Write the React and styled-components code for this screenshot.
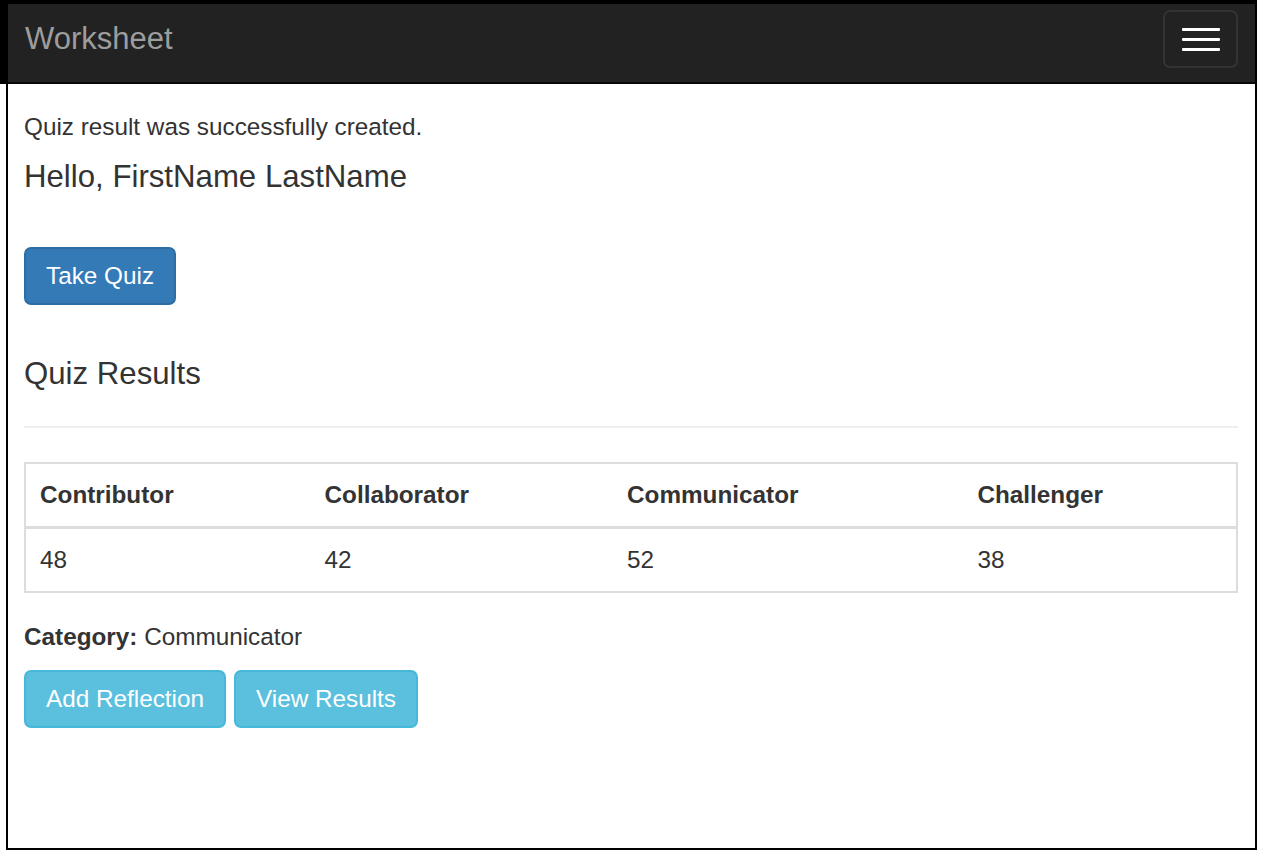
import React from "react";
import styled, { createGlobalStyle } from "styled-components";

const GlobalStyle = createGlobalStyle`
  html, body {
    margin: 0;
    padding: 0;
    background: #fff;
  }
  body {
    font-family: "Liberation Sans", Arial, sans-serif;
    color: #333;
  }
  * { box-sizing: border-box; }
`;

const Frame = styled.div`
  width: 1251px;
  height: 850px;
  margin-left: 6px;
  border: 2px solid #000;
  border-top: 0;
  display: flex;
  flex-direction: column;
`;

const Navbar = styled.nav`
  height: 84px;
  background: #222;
  border-top: 4px solid #000;
  border-bottom: 2px solid #080808;
  box-shadow: -8px 0 0 #000;
  display: flex;
  align-items: flex-start;
  justify-content: space-between;
  padding: 6px 17px 0 17px;
`;

const Brand = styled.a`
  font-size: 31px;
  line-height: 58px;
  color: #9d9d9d;
  text-decoration: none;
`;

const Toggle = styled.button`
  width: 75px;
  height: 58px;
  border: 2px solid #333;
  border-radius: 7px;
  background: transparent;
  display: flex;
  flex-direction: column;
  align-items: center;
  justify-content: center;
  gap: 7px;
  padding: 0;
`;

const Bar = styled.span`
  display: block;
  width: 38px;
  height: 3px;
  border-radius: 1px;
  background: #fff;
`;

const Content = styled.main`
  padding: 26px 17px 0 16px;
  display: flex;
  flex-direction: column;
  align-items: flex-start;
`;

const Notice = styled.p`
  margin: 0;
  font-size: 24.3px;
  line-height: 34px;
`;

const Heading = styled.h4`
  margin: ${(p) => p.$top}px 0 0 0;
  font-size: 31.2px;
  line-height: 34px;
  font-weight: 400;
  color: #333;
`;

const Button = styled.a`
  display: inline-block;
  font-size: 24.3px;
  line-height: 34px;
  padding: 10px 20px;
  border-radius: 7px;
  color: #fff;
  text-decoration: none;
  background: ${(p) => (p.$variant === "info" ? "#5bc0de" : "#337ab7")};
  border: 2px solid ${(p) => (p.$variant === "info" ? "#46b8da" : "#2e6da4")};
`;

const TakeQuiz = styled(Button)`
  margin-top: 53px;
`;

const Rule = styled.hr`
  align-self: stretch;
  margin: 35px 0 0 0;
  border: 0;
  border-top: 2px solid #eee;
  height: 0;
`;

const Table = styled.table`
  align-self: stretch;
  margin-top: 34px;
  border-collapse: collapse;
  border: 2px solid #ddd;
  font-size: 24.3px;
`;

const Th = styled.th`
  text-align: left;
  font-weight: 700;
  padding: 14px;
  line-height: 34px;
  border: 2px solid #ddd;
  border-left: 0;
  border-right: 0;
  border-bottom: 3px solid #ddd;
  width: ${(p) => p.$w}px;
`;

const Td = styled.td`
  padding: 14px;
  line-height: 34px;
`;

const Category = styled.p`
  margin: 27px 0 0 0;
  font-size: 24.3px;
  line-height: 34px;
  strong { font-weight: 700; }
`;

const ButtonRow = styled.div`
  display: flex;
  gap: 8px;
  margin-top: 16px;
`;

const columns = [
  { name: "Contributor", value: 48, w: 286 },
  { name: "Collaborator", value: 42, w: 303 },
  { name: "Communicator", value: 52, w: 351 },
  { name: "Challenger", value: 38, w: 274 },
];

export default function App() {
  return (
    <>
      <GlobalStyle />
      <Frame>
        <Navbar>
          <Brand href="#">Worksheet</Brand>
          <Toggle aria-label="Toggle navigation">
            <Bar />
            <Bar />
            <Bar />
          </Toggle>
        </Navbar>
        <Content>
          <Notice>Quiz result was successfully created.</Notice>
          <Heading $top={16}>Hello, FirstName LastName</Heading>
          <TakeQuiz href="#">Take Quiz</TakeQuiz>
          <Heading $top={52}>Quiz Results</Heading>
          <Rule />
          <Table>
            <thead>
              <tr>
                {columns.map((c) => (
                  <Th key={c.name} $w={c.w}>
                    {c.name}
                  </Th>
                ))}
              </tr>
            </thead>
            <tbody>
              <tr>
                {columns.map((c) => (
                  <Td key={c.name}>{c.value}</Td>
                ))}
              </tr>
            </tbody>
          </Table>
          <Category>
            <strong>Category:</strong> Communicator
          </Category>
          <ButtonRow>
            <Button href="#" $variant="info">
              Add Reflection
            </Button>
            <Button href="#" $variant="info">
              View Results
            </Button>
          </ButtonRow>
        </Content>
      </Frame>
    </>
  );
}
